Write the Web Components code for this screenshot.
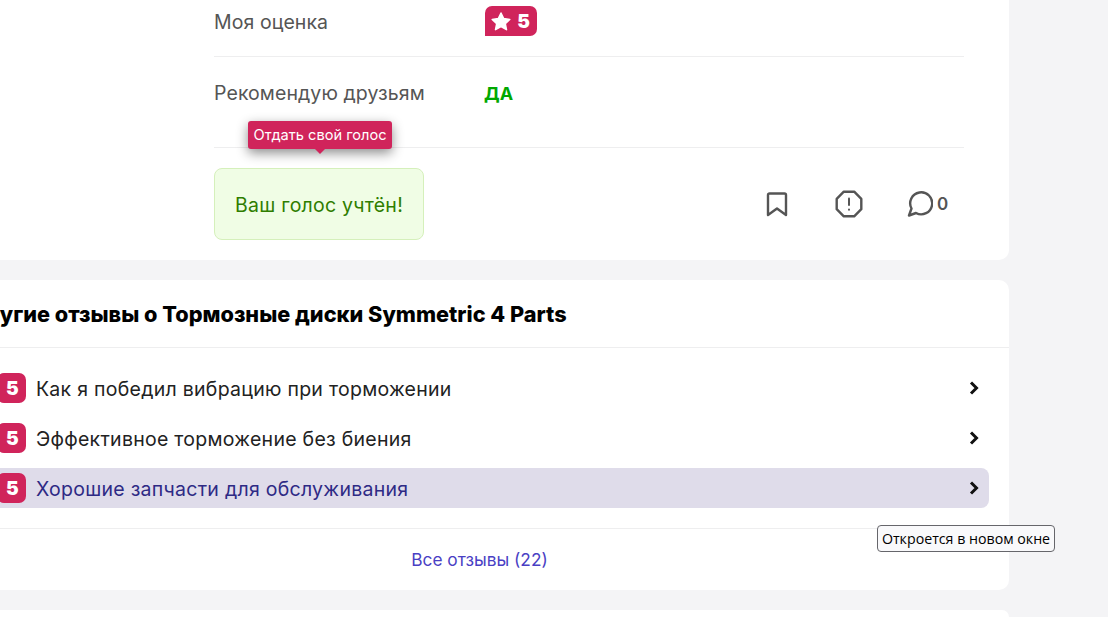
<!DOCTYPE html>
<html lang="ru">
<head>
<meta charset="utf-8">
<title>Отзыв</title>
<style>
  html, body { margin: 0; height: 617px; overflow: hidden; background: #f4f4f6; }
  body { font-family: Inter, "Noto Sans", sans-serif; position: relative; }
  .column { width: 1059px; margin: -12px 0 0 -50px; display: flex; flex-direction: column; gap: 20px; }
</style>
</head>
<body>
<div class="column">
  <review-card>
    <review-row label="Моя оценка" style="height:68px"><rating-badge star>5</rating-badge></review-row>
    <review-row label="Рекомендую друзьям" style="height:72px;padding-bottom:18px"><span style="color:#00a800;font-weight:700;font-size:18px;margin-left:-1px">ДА</span></review-row>
    <vote-bar></vote-bar>
  </review-card>
  <other-reviews heading="Другие отзывы о Тормозные диски Symmetric 4 Parts">
    <review-link>Как я победил вибрацию при торможении</review-link>
    <review-link>Эффективное торможение без биения</review-link>
    <review-link active>Хорошие запчасти для обслуживания</review-link>
  </other-reviews>
  <blank-card></blank-card>
</div>
<native-tip>Откроется в новом окне</native-tip>

<script>
class ReviewCard extends HTMLElement {
  constructor() {
    super();
    this.attachShadow({ mode: 'open' });
    this.shadowRoot.innerHTML = `
    <style>
      :host { display: block; background: #fff; border-radius: 0 0 10px 10px; padding: 0 45px 20px 264px; }
    </style>
    <slot></slot>`;
  }
}
customElements.define('review-card', ReviewCard);

class ReviewRow extends HTMLElement {
  constructor() {
    super();
    this.attachShadow({ mode: 'open' });
    this.shadowRoot.innerHTML = `
    <style>
      :host { display: flex; align-items: center; border-bottom: 1px solid #eeeeef; }
      .label { width: 271px; font-size: 19.500px; letter-spacing: .08px; color: #555; }
    </style>
    <div class="label"></div>
    <slot></slot>`;
    this.shadowRoot.querySelector('.label').textContent = this.getAttribute('label');
  }
}
customElements.define('review-row', ReviewRow);

class RatingBadge extends HTMLElement {
  constructor() {
    super();
    this.attachShadow({ mode: 'open' });
    const star = this.hasAttribute('star') ? `<svg width="22" height="21" viewBox="0 0 22 21"><path d="M11 2l2.700 5.600 6.100.8-4.500 4.200 1.200 6.100L11 15.700l-5.500 3 1.200-6.100-4.500-4.200 6.100-.8z" fill="#fff" stroke="#fff" stroke-width="1.500" stroke-linejoin="round"/></svg>` : '';
    this.shadowRoot.innerHTML = `
    <style>
      :host { display: inline-flex; align-items: center; justify-content: center; gap: 5px; box-sizing: border-box; width: 52px; height: 30px; padding-right: 2px; margin-bottom: 2px; background: #d0245b; color: #fff; border-radius: 7px 7px 7px 0; font-weight: 900; font-size: 19px; }
    </style>
    ${star}<slot></slot>`;
  }
}
customElements.define('rating-badge', RatingBadge);

class VoteBar extends HTMLElement {
  constructor() {
    super();
    this.attachShadow({ mode: 'open' });
    this.shadowRoot.innerHTML = `
    <style>
      :host { display: flex; align-items: center; justify-content: space-between; position: relative; padding-top: 20px; }
      .done { box-sizing: border-box; width: 210px; height: 72px; padding-top: 2px; display: flex; align-items: center; justify-content: center; background: #f0fde5; border: 1px solid #d5f0bb; border-radius: 8px; color: #2f7d00; font-size: 19.500px; letter-spacing: .25px; }
      .tip { position: absolute; left: 34px; top: -27px; box-sizing: border-box; width: 144px; height: 28px; display: flex; align-items: center; justify-content: center; background: #d0245b; color: #fff; font-size: 14.600px; border-radius: 3px; box-shadow: 0 4px 12px rgba(0,0,0,.45); white-space: nowrap; }
      .tip::after { content: ""; position: absolute; left: 66px; bottom: -5px; border: 6px solid transparent; border-bottom: 0; border-top: 6px solid #d0245b; }
      .actions { display: flex; align-items: center; margin-right: 16px; color: #555; }
      svg { display: block; fill: none; stroke: #555; stroke-width: 2.400; stroke-linejoin: round; stroke-linecap: round; }
      .mark { margin-right: 45px; }
      .warn { margin-right: 43px; }
      .count { width: 11px; margin-left: 4px; font-size: 17px; font-weight: 600; }
    </style>
    <div class="tip">Отдать свой голос</div>
    <div class="done">Ваш голос учтён!</div>
    <div class="actions">
      <svg class="mark" width="24" height="28" viewBox="0 0 24 28"><path d="M4.500 3.500h15a1.500 1.500 0 0 1 1.500 1.500v20l-9-6.500-9 6.500V5a1.500 1.500 0 0 1 1.500-1.500z"/></svg>
      <svg class="warn" width="30" height="30" viewBox="0 0 30 30"><path d="M9.800 2.700h10.400l7.100 7.100v10.400l-7.100 7.100H9.800l-7.100-7.100V9.800z"/><path d="M15 9.500v6.500" stroke-width="2"/><path d="M15 20.500v.2" stroke-width="2"/></svg>
      <svg width="26" height="26" viewBox="0 0 26 26"><path d="M2 24.500l2.500-7A11 11 0 1 1 9 22z"/></svg>
      <span class="count">0</span>
    </div>`;
  }
}
customElements.define('vote-bar', VoteBar);

class OtherReviews extends HTMLElement {
  constructor() {
    super();
    this.attachShadow({ mode: 'open' });
    this.shadowRoot.innerHTML = `
    <style>
      :host { display: block; background: #fff; border-radius: 10px; }
      h2 { margin: 0; height: 67px; padding: 0 20px 0 17px; display: flex; align-items: center; border-bottom: 1px solid #eeeeef; font-size: 21.700px; font-weight: 800; color: #000; }
      .list { display: flex; flex-direction: column; gap: 10px; padding: 20px; border-bottom: 1px solid #eeeeef; }
      .all { height: 61px; display: flex; align-items: center; justify-content: center; color: #4a3fc4; font-size: 17.300px; }
    </style>
    <h2></h2>
    <div class="list"><slot></slot></div>
    <div class="all">Все отзывы (22)</div>`;
    this.shadowRoot.querySelector('h2').textContent = this.getAttribute('heading');
  }
}
customElements.define('other-reviews', OtherReviews);

class ReviewLink extends HTMLElement {
  constructor() {
    super();
    this.attachShadow({ mode: 'open' });
    this.shadowRoot.innerHTML = `
    <style>
      :host { display: flex; align-items: center; height: 40px; padding: 0 9px 0 27px; border-radius: 8px; color: #222; font-size: 19.500px; letter-spacing: .27px; }
      :host([active]) { background: #dfdcea; color: #2e2a85; }
      .num { flex: none; box-sizing: border-box; width: 29px; height: 30px; padding-left: 2px; display: flex; align-items: center; justify-content: center; background: #d0245b; color: #fff; border-radius: 7px; font-weight: 900; font-size: 19px; margin-right: 10px; }
      .text { flex: 1; padding-top: 2px; }
      svg { display: block; fill: none; stroke: #111; stroke-width: 3; }
    </style>
    <span class="num">5</span>
    <span class="text"><slot></slot></span>
    <svg width="12" height="14" viewBox="0 0 12 14"><path d="M3 1.500L8.500 7 3 12.500"/></svg>`;
  }
}
customElements.define('review-link', ReviewLink);

class BlankCard extends HTMLElement {
  constructor() {
    super();
    this.attachShadow({ mode: 'open' });
    this.shadowRoot.innerHTML = `<style>:host { display: block; height: 7px; background: #fff; border-radius: 7px 7px 0 0; }</style>`;
  }
}
customElements.define('blank-card', BlankCard);

class NativeTip extends HTMLElement {
  constructor() {
    super();
    this.attachShadow({ mode: 'open' });
    this.shadowRoot.innerHTML = `
    <style>
      :host { position: absolute; left: 877px; top: 525px; box-sizing: border-box; width: 178px; height: 27px; display: flex; align-items: center; justify-content: center; background: #f9f9fb; border: 1px solid #66666b; border-radius: 4px; color: #000; font: 14.200px "Open Sans", "Noto Sans", sans-serif; white-space: nowrap; }
    </style>
    <slot></slot>`;
  }
}
customElements.define('native-tip', NativeTip);
</script>
</body>
</html>
